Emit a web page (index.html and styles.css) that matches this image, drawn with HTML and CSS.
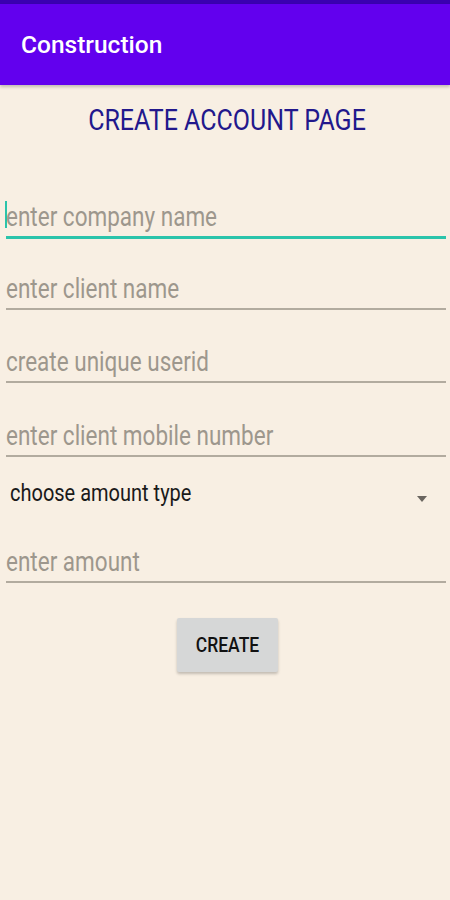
FILE: index.html
```html
<!DOCTYPE html>
<html>
<head>
<meta charset="utf-8">
<link rel="stylesheet" href="styles.css">
</head>
<body>
<div class="statusbar"></div>
<header class="appbar"><span class="apptitle">Construction</span></header>
<main class="content">
  <h1 class="heading"><span class="heading-text">CREATE ACCOUNT PAGE</span></h1>
  <div class="field first focused"><span class="caret"></span><span class="ph">enter company name</span></div>
  <div class="field f2"><span class="ph">enter client name</span></div>
  <div class="field f3"><span class="ph">create unique userid</span></div>
  <div class="field f4"><span class="ph">enter client mobile number</span></div>
  <div class="spinner"><span class="spin-text">choose amount type</span><span class="arrow"></span></div>
  <div class="field f5"><span class="ph">enter amount</span></div>
  <div class="btnrow"><button class="btn"><span class="btn-text">CREATE</span></button></div>
</main>
</body>
</html>
```
FILE: styles.css
```css
html, body { margin: 0; padding: 0; }
body {
  width: 450px; height: 900px; background: #f8efe3;
  font-family: Roboto, "Noto Sans", sans-serif; overflow: hidden;
}
.statusbar { height: 4px; background: #3a00b0; }
.appbar {
  height: 81px; background: #6200ee; box-sizing: border-box;
  padding: 28px 0 0 21px; box-shadow: 0 2px 3px rgba(0,0,0,0.22);
  position: relative;
}
.apptitle {
  display: block; color: #fff; font-size: 24.5px; line-height: 25px; font-weight: 500;
}
.content { padding: 0 4px 0 6px; }
.heading {
  margin: 22px 0 0; text-align: center; font-weight: 400; font-size: 25px;
  line-height: 30px; color: #22188c; padding-left: 2px;
}
.heading-text {
  display: inline-block; transform: scaleY(1.15); transform-origin: 50% 23.5px;
}
.field {
  position: relative; height: 29px; padding-top: 2px; border-bottom: 2px solid #b2ab9f;
}
.field.first { margin-top: 68px; }
.field.focused { border-bottom: 3px solid #2bc4ab; }
.f2 { margin-top: 38px; }
.f3 { margin-top: 40px; }
.f4 { margin-top: 41px; }
.f5 { margin-top: 26px; }
.ph {
  display: inline-block; font-size: 22.5px; line-height: 22px; color: #9d978d;
  transform: scaleY(1.2); transform-origin: 0 18.7px;
}
.caret {
  position: absolute; left: -1px; top: -4px; width: 2px; height: 27px; background: #2bc4ab;
}
.spinner {
  margin-top: 27px; height: 40px; display: flex; justify-content: space-between;
  align-items: flex-start; padding: 0 19px 0 4px;
}
.spin-text {
  display: inline-block; font-size: 20px; line-height: 20px; color: #1a1a1a;
  transform: scaleY(1.2); transform-origin: 0 16.8px;
}
.arrow {
  width: 0; height: 0; border-left: 5px solid transparent; border-right: 5px solid transparent;
  border-top: 6px solid #6a655f; margin-top: 12px;
}
.btnrow { display: flex; justify-content: center; margin-top: 35px; }
.btn {
  width: 101px; height: 54px; background: #d6d7d7; border: none; border-radius: 2px;
  font-family: Roboto, sans-serif; font-size: 17.5px; font-weight: 500; color: #111;
  box-shadow: 0 2px 3px rgba(0,0,0,0.22); margin-left: 3px; padding: 0;
  display: flex; align-items: center; justify-content: center;
}
.btn-text { display: inline-block; transform: scaleY(1.2); }
```
